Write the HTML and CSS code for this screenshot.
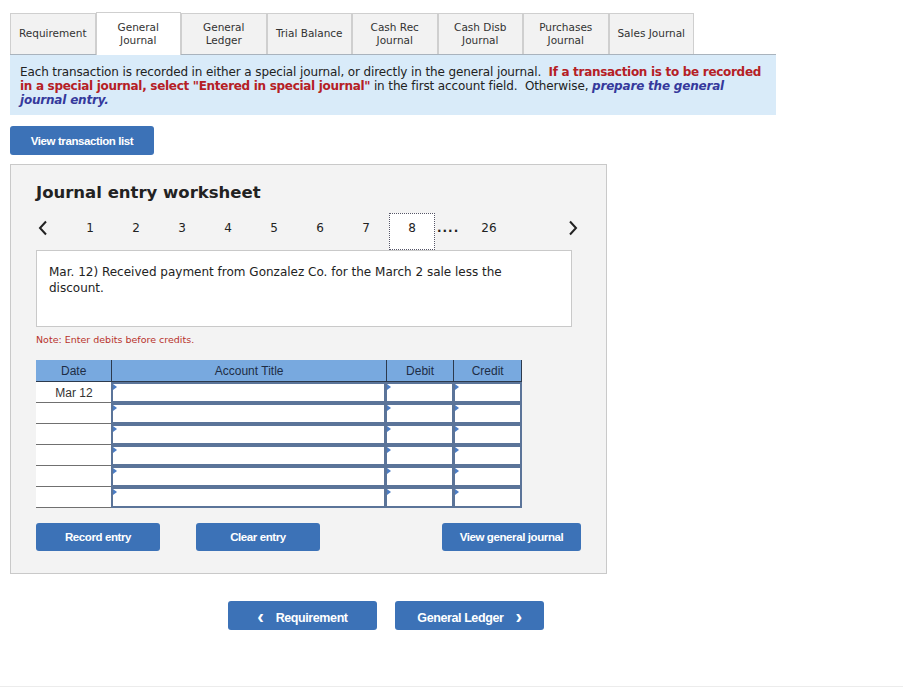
FILE: index.html
```html
<!DOCTYPE html>
<html lang="en">
<head>
    <meta charset="UTF-8">
    <title>Journal entry worksheet</title>
    <link rel="stylesheet" href="styles.css">
</head>
<body>
    <div class="tabs">
        <div class="tab">Requirement</div>
        <div class="tab active">General<br>Journal</div>
        <div class="tab">General<br>Ledger</div>
        <div class="tab">Trial Balance</div>
        <div class="tab">Cash Rec<br>Journal</div>
        <div class="tab">Cash Disb<br>Journal</div>
        <div class="tab">Purchases<br>Journal</div>
        <div class="tab">Sales Journal</div>
    </div>
    <div class="info">
        Each transaction is recorded in either a special journal, or directly in the general journal.&nbsp;
        <b class="red">If a transaction is to be recorded in a special journal, select "Entered in special journal"</b>
        in the first account field.&nbsp; Otherwise, <b class="blue">prepare the general journal entry.</b>
    </div>

    <button type="button" class="btn btn-list">View transaction list</button>

    <div class="worksheet">
        <h2>Journal entry worksheet</h2>
        <div class="pager">
            <span class="arrow prev"><svg width="10" height="16" viewBox="0 0 10 16"><polyline points="8,1.5 2,8 8,14.5" fill="none" stroke="#222" stroke-width="2"/></svg></span>
            <span class="page">1</span>
            <span class="page">2</span>
            <span class="page">3</span>
            <span class="page">4</span>
            <span class="page">5</span>
            <span class="page">6</span>
            <span class="page">7</span>
            <span class="page current">8</span>
            <span class="dots">....</span>
            <span class="page">26</span>
            <span class="arrow next"><svg width="10" height="16" viewBox="0 0 10 16"><polyline points="2,1.5 8,8 2,14.5" fill="none" stroke="#222" stroke-width="2"/></svg></span>
        </div>
        <div class="desc">Mar. 12) Received payment from Gonzalez Co. for the March 2 sale less the discount.</div>
        <p class="note">Note: Enter debits before credits.</p>

        <table class="entry">
            <thead>
                <tr>
                    <th class="c-date">Date</th>
                    <th class="c-acct">Account Title</th>
                    <th class="c-num">Debit</th>
                    <th class="c-num">Credit</th>
                </tr>
            </thead>
            <tbody>
                <tr><td class="date">Mar 12</td><td><div class="cell"></div></td><td><div class="cell"></div></td><td><div class="cell"></div></td></tr>
                <tr><td class="date"></td><td><div class="cell"></div></td><td><div class="cell"></div></td><td><div class="cell"></div></td></tr>
                <tr><td class="date"></td><td><div class="cell"></div></td><td><div class="cell"></div></td><td><div class="cell"></div></td></tr>
                <tr><td class="date"></td><td><div class="cell"></div></td><td><div class="cell"></div></td><td><div class="cell"></div></td></tr>
                <tr><td class="date"></td><td><div class="cell"></div></td><td><div class="cell"></div></td><td><div class="cell"></div></td></tr>
                <tr><td class="date"></td><td><div class="cell"></div></td><td><div class="cell"></div></td><td><div class="cell"></div></td></tr>
            </tbody>
        </table>

        <div class="actions">
            <button type="button" class="btn btn-record">Record entry</button>
            <button type="button" class="btn btn-clear">Clear entry</button>
            <button type="button" class="btn btn-view">View general journal</button>
        </div>
    </div>

    <div class="nav">
        <button type="button" class="btn btn-nav"><span class="chev">&lsaquo;</span>Requirement</button>
        <button type="button" class="btn btn-nav">General Ledger<span class="chev right">&rsaquo;</span></button>
    </div>
    <div class="footer-line"></div>
</body>
</html>
```

FILE: styles.css
```css
body { margin: 0; font-family: "DejaVu Sans", Verdana, sans-serif; color: #222; background: #fff; }

.tabs { display: flex; align-items: flex-end; padding: 12px 0 0 10px; height: 42px; }
.tab {
    box-sizing: border-box; width: 85.5px; height: 41px;
    display: flex; align-items: center; justify-content: center; text-align: center;
    font-size: 10.5px; line-height: 13px; color: #333; padding-bottom: 1px;
    background: #f2f2f2; border: 1px solid #cfcfcf; border-bottom: none;
}
.tab.active { background: #fff; height: 43px; margin-bottom: -1px; position: relative; z-index: 1; }

.info {
    box-sizing: border-box; margin-left: 10px; width: 766px; height: 61px;
    background: #d9ebf9; border-top: 1px solid #a9b3bd;
    padding: 10px 5px 8px 10px; font-size: 12px; line-height: 14px; color: #222; letter-spacing: -0.12px;
}
.red { color: #b52025; letter-spacing: -0.3px; }
.blue { color: #35399c; font-style: italic; letter-spacing: -0.2px; }

.btn {
    border: none; border-radius: 3px; background: #3c72b7; color: #fff; cursor: pointer;
    font-family: "Liberation Sans", Arial, sans-serif; font-weight: bold; font-size: 11.5px;
    letter-spacing: -0.4px; height: 29px; padding: 0;
}
.btn-list { display: block; margin: 11px 0 0 10px; width: 144px; }

.worksheet {
    box-sizing: border-box; margin: 9px 0 0 10px; width: 597px; height: 410px;
    background: #f3f3f3; border: 1px solid #c9c9c9; padding: 16px 25px 0;
}
.worksheet h2 { margin: 0; font-size: 16.5px; font-weight: bold; color: #222; height: 32px; line-height: 23px; }

.pager { display: flex; align-items: flex-start; height: 37px; font-size: 12px; color: #222; }
.page { width: 46px; text-align: center; line-height: 30px; }
.page.current { box-sizing: border-box; height: 37px; line-height: 29px; background: #fff; border: 1px dotted #556; }
.arrow { display: flex; align-items: center; height: 30px; }
.prev { width: 31px; padding-left: 2px; box-sizing: border-box; }
.next { margin-left: 56px; }
.dots { width: 31px; font-weight: bold; letter-spacing: 1px; padding-left: 2px; box-sizing: border-box; line-height: 30px; }

.desc {
    box-sizing: border-box; width: 536px; height: 77px; background: #fff; border: 1px solid #c9c9c9;
    padding: 13px 40px 13px 12px; font-size: 12px; line-height: 16px; color: #222;
}
.note { margin: 6px 0 14px; font-size: 9.5px; color: #b8322c; height: 13px; line-height: 13px; }

.entry { border-collapse: collapse; width: 486px; font-family: "Liberation Sans", Arial, sans-serif; font-size: 12px; }
.entry th {
    height: 21px; padding: 0; background: #78a9df; color: #1e2d45; font-weight: normal;
    border-left: 1px solid #2d3a4d; border-bottom: 1px solid #2d3a4d;
}
.entry th:first-child { border-left: none; }
.entry th:last-child { border-right: 1px solid #2d3a4d; }
.c-date { width: 76px; }
.c-acct { width: 276px; }
.c-num { width: 67px; }
.entry td { padding: 0; height: 21px; }
.entry td.date { background: #fff; box-shadow: inset 0 -1px #707070, inset -1px 0 #506b90; text-align: center; color: #333; }
.cell { box-sizing: border-box; height: 21px; background: #fff; border: 2px solid #5b7499; position: relative; margin-left: -1px; }
.cell::before {
    content: ""; position: absolute; left: 0; top: 0;
    border-left: 4px solid #4b7cc3; border-top: 3px solid transparent; border-bottom: 3px solid transparent;
}

.actions { display: flex; margin-top: 15px; }
.btn-record, .btn-clear { width: 124px; height: 28px; }
.btn-clear { margin-left: 36px; }
.btn-view { width: 139px; height: 28px; margin-left: 122px; }

.nav { display: flex; gap: 18px; margin: 27px 0 0 228px; }
.btn-nav { width: 149px; height: 29px; font-size: 12.5px; }
.chev { font-size: 20px; margin-right: 12px; position: relative; top: 1px; }
.chev.right { margin: 0 0 0 12px; }

.footer-line { margin-top: 56px; height: 1px; background: #ececec; }
```
